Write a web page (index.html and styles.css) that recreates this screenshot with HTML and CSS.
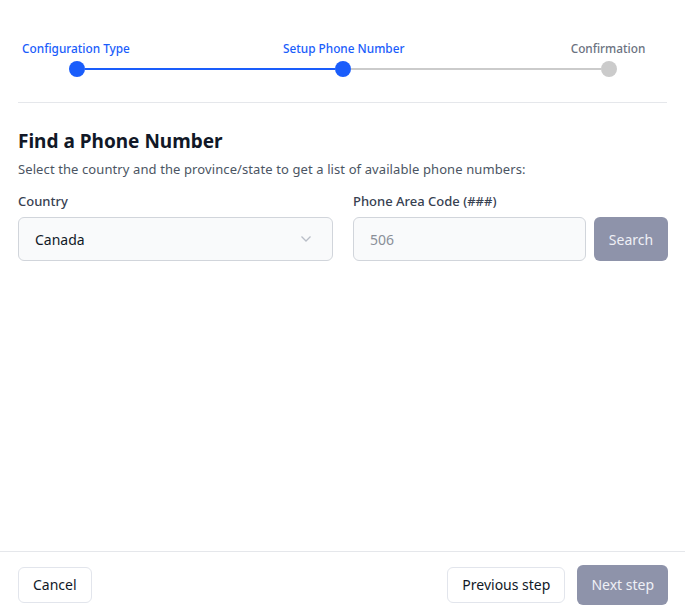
FILE: index.html
```html
<!DOCTYPE html>
<html lang="en">
<head>
<meta charset="utf-8">
<title>Find a Phone Number</title>
<link rel="stylesheet" href="styles.css">
</head>
<body>
<div class="page">
  <main class="content">
    <div class="stepper">
      <div class="step-labels">
        <span class="step-label active">Configuration Type</span>
        <span class="step-label active">Setup Phone Number</span>
        <span class="step-label">Confirmation</span>
      </div>
      <div class="track">
        <span class="dot active"></span>
        <span class="bar active"></span>
        <span class="dot active"></span>
        <span class="bar"></span>
        <span class="dot"></span>
      </div>
    </div>
    <hr class="divider">
    <h1 class="title">Find a Phone Number</h1>
    <p class="subtitle">Select the country and the province/state to get a list of available phone numbers:</p>
    <div class="form-grid">
      <div class="field">
        <label class="field-label">Country</label>
        <div class="select">
          <span>Canada</span>
          <svg class="chevron" width="12" height="8" viewBox="0 0 12 8"><path d="M1.5 1.5 L6 6 L10.5 1.5" fill="none" stroke="#b9bec7" stroke-width="1.3"/></svg>
        </div>
      </div>
      <div class="field">
        <label class="field-label">Phone Area Code (###)</label>
        <div class="input-row">
          <div class="input">506</div>
          <button class="btn btn-disabled search">Search</button>
        </div>
      </div>
    </div>
  </main>
  <footer class="footer">
    <button class="btn btn-outline">Cancel</button>
    <div class="footer-right">
      <button class="btn btn-outline">Previous step</button>
      <button class="btn btn-disabled next">Next step</button>
    </div>
  </footer>
</div>
</body>
</html>
```

FILE: styles.css
```css
* { box-sizing: border-box; }
html, body { margin: 0; padding: 0; background: #fff; }
body {
  font-family: "Noto Sans", "Open Sans", sans-serif;
  color: #111827;
  width: 685px;
  height: 611px;
}
.page {
  height: 611px;
  display: flex;
  flex-direction: column;
}
.content {
  flex: 1;
  padding: 38px 17px 0 17px;
}
.stepper { display: flex; flex-direction: column; }
.step-labels {
  display: flex;
  justify-content: space-between;
  margin-right: 1px;
}
.step-label {
  width: 118px;
  text-align: center;
  font-size: 11.8px;
  font-weight: 500;
  color: #6b7280;
  line-height: 20px;
  white-space: nowrap;
}
.step-label.active { color: #1a5dfb; }
.track {
  display: flex;
  align-items: center;
  padding: 3px 51px 0 52px;
}
.dot {
  width: 16px;
  height: 16px;
  border-radius: 50%;
  background: #cbcbcb;
  flex: none;
}
.dot.active { background: #1a5dfb; }
.bar {
  flex: 1;
  height: 2px;
  background: #cbcbcb;
}
.bar.active { background: #1a5dfb; }
.divider {
  border: 0;
  border-top: 1px solid #e5e7eb;
  margin: 25px 1px 0 1px;
}
.title {
  font-size: 19px;
  font-weight: 700;
  margin: 26px 0 0 1px;
  line-height: 24px;
  color: #111827;
}
.subtitle {
  font-size: 13px;
  letter-spacing: 0.1px;
  color: #4b5563;
  margin: 7px 0 0 1px;
  line-height: 18px;
}
.form-grid {
  display: grid;
  grid-template-columns: 1fr 1fr;
  column-gap: 20px;
  margin: 12px 0 0 1px;
}
.field { display: flex; flex-direction: column; }
.field-label {
  font-size: 13px;
  font-weight: 500;
  color: #374151;
  line-height: 22px;
  margin-bottom: 5px;
}
.select, .input {
  height: 44px;
  border: 1px solid #d1d5db;
  border-radius: 6px;
  background: #f9fafb;
  display: flex;
  align-items: center;
  font-size: 14px;
}
.select {
  justify-content: space-between;
  padding: 0 20px 0 16px;
  color: #111827;
}
.input {
  flex: 1;
  padding: 0 16px;
  color: #8a8f98;
}
.input-row { display: flex; gap: 8px; }
.btn {
  font-family: inherit;
  font-size: 14px;
  border-radius: 6px;
  cursor: pointer;
}
.btn-disabled {
  background: #8e93aa;
  color: #eef0f6;
  border: 0;
}
.search { width: 74px; height: 44px; }
.btn-outline {
  background: #fff;
  border: 1px solid #e2e5ec;
  color: #111827;
  height: 36px;
  padding: 0 14px;
}
.footer {
  border-top: 1px solid #e5e7eb;
  height: 60px;
  flex: none;
  display: flex;
  align-items: center;
  justify-content: space-between;
  padding: 6px 17px 0 18px;
}
.footer-right { display: flex; gap: 12px; align-items: center; }
.next { height: 40px; padding: 0 14px; }
```
